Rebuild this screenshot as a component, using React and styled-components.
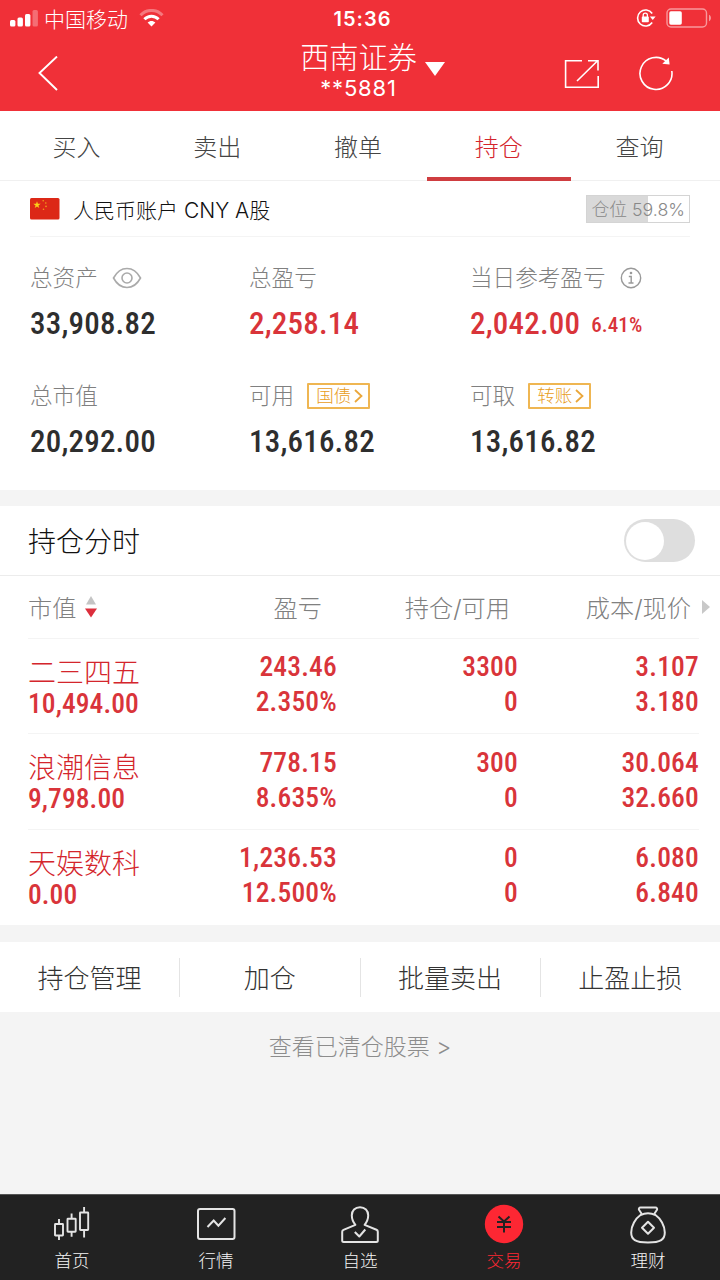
import React from 'react'
import styled, {createGlobalStyle, css} from 'styled-components'

const tabs = ['买入', '卖出', '撤单', '持仓', '查询']

const holdings = [
  {
    name: '二三四五',
    value: '10,494.00',
    profit: '243.46',
    rate: '2.350%',
    amount: '3300',
    usable: '0',
    cost: '3.107',
    price: '3.180'
  },
  {
    name: '浪潮信息',
    value: '9,798.00',
    profit: '778.15',
    rate: '8.635%',
    amount: '300',
    usable: '0',
    cost: '30.064',
    price: '32.660'
  },
  {
    name: '天娱数科',
    value: '0.00',
    profit: '1,236.53',
    rate: '12.500%',
    amount: '0',
    usable: '0',
    cost: '6.080',
    price: '6.840'
  }
]

const actions = ['持仓管理', '加仓', '批量卖出', '止盈止损']

const SignalIcon = () => (
  <svg width="29" height="18" viewBox="0 0 29 18" fill="#fff">
    <rect x="0" y="11" width="5.4" height="6.5" rx="1.5" />
    <rect x="7.5" y="8.5" width="5.4" height="9" rx="1.5" />
    <rect x="15" y="5" width="5.4" height="12.5" rx="1.5" />
    <rect x="22.5" y="1" width="5.4" height="16.5" rx="1.5" opacity="0.3" />
  </svg>
)

const WifiIcon = () => (
  <svg width="25" height="18" viewBox="0 0 25 18" fill="none" stroke="#fff">
    <path d="M1.5 6.2C7.5-.2 17.5-.2 23.5 6.2" strokeWidth="3" opacity="0.35" />
    <path d="M5.4 10.2c4-4.1 10.2-4.1 14.2 0" strokeWidth="3" />
    <path d="M12.5 17.6l-3.9-4c2.2-2.1 5.6-2.1 7.8 0z" fill="#fff" stroke="none" />
  </svg>
)

const LockIcon = () => (
  <svg width="20" height="20" viewBox="0 0 20 20" fill="none" stroke="#fff">
    <path d="M16.2 5.5A8 8 0 1 0 16.2 14.5" strokeWidth="1.6" />
    <path d="M13.8 8.4h5.8L16.8 12z" fill="#fff" stroke="none" />
    <rect x="5.8" y="8.6" width="7" height="5.6" rx="0.8" fill="#fff" stroke="none" />
    <path d="M7.2 9V7.3a2.1 2.1 0 0 1 4.2 0V9" strokeWidth="1.3" />
  </svg>
)

const BatteryIcon = () => (
  <svg width="46" height="20" viewBox="0 0 46 20">
    <rect x="1" y="1" width="39.5" height="18" rx="4" fill="none" stroke="#fff" strokeWidth="1.4" opacity="0.5" />
    <rect x="3.3" y="3.3" width="12.5" height="13.4" rx="1.6" fill="#fff" />
    <path d="M43 6.8c2.6 1 2.6 5.4 0 6.4z" fill="#fff" opacity="0.5" />
  </svg>
)

const BackIcon = () => (
  <svg width="22" height="36" viewBox="0 0 22 36" fill="none" stroke="#fff" strokeWidth="1.9">
    <path d="M20 .5L2.5 17 20 34" />
  </svg>
)

const ShareIcon = () => (
  <svg width="36" height="30" viewBox="0 0 36 30" fill="none" stroke="#fff" strokeWidth="1.6">
    <path d="M18 1.8H1.6v26.4h32.6V17" />
    <path d="M13 22L33.6 1.8M24 1.8h10v9.8" />
  </svg>
)

const RefreshIcon = () => (
  <svg width="36" height="36" viewBox="0 0 36 36" fill="none" stroke="#fff" strokeWidth="1.6">
    <path d="M33.8 15A16 16 0 1 1 28.3 5.2" />
    <path d="M24.3 7.8l6.5-6.2.8 7z" fill="#fff" stroke="none" />
  </svg>
)

const FlagIcon = () => (
  <svg width="30" height="22" viewBox="0 0 30 22">
    <rect width="29.5" height="21.5" rx="1.5" fill="#dc2817" />
    <path
      d="M7 3.2l.9 2.6h2.8L8.4 7.4l.9 2.7L7 8.5l-2.3 1.6.9-2.7-2.3-1.6h2.8z"
      fill="#fbd019"
    />
    <g fill="#f0a01c">
      <circle cx="13.2" cy="2.7" r="0.8" />
      <circle cx="15.8" cy="5" r="0.8" />
      <circle cx="16" cy="8.4" r="0.8" />
      <circle cx="13.5" cy="11.2" r="0.8" />
    </g>
  </svg>
)

const EyeIcon = () => (
  <svg width="30" height="22" viewBox="0 0 30 22" fill="none" stroke="#aaa" strokeWidth="1.6">
    <path d="M1.5 11C5 4.5 9.7 1.5 15 1.5S25 4.5 28.5 11C25 17.5 20.3 20.5 15 20.5S5 17.5 1.5 11z" />
    <circle cx="15" cy="11" r="5" />
  </svg>
)

const InfoIcon = () => (
  <svg width="22" height="22" viewBox="0 0 22 22" fill="none" stroke="#999" strokeWidth="1.4">
    <circle cx="11" cy="11" r="9.7" />
    <path d="M8.8 9.5h2.4v6.3M8.5 16h5" />
    <circle cx="11" cy="6" r="1.3" fill="#999" stroke="none" />
  </svg>
)

const TagArrow = () => (
  <svg width="9" height="14" viewBox="0 0 9 14" fill="none" stroke="#eba73a" strokeWidth="1.8">
    <path d="M1 1l6.5 6L1 13" />
  </svg>
)

const SortIcon = () => (
  <svg width="12" height="22" viewBox="0 0 12 22">
    <path d="M6 0l5 8.5H1z" fill="#c4c4c4" />
    <path d="M0 12.5h12L6 21.5z" fill="#dc2e3c" />
  </svg>
)

const CandleIcon = () => (
  <svg width="38" height="36" viewBox="0 0 38 36" fill="none" stroke="#e4e4e4" strokeWidth="1.9">
    <rect x="2" y="18" width="8" height="11.5" rx="0.5" />
    <rect x="14.5" y="12.8" width="8.2" height="13" rx="0.5" />
    <rect x="27" y="6.5" width="8.2" height="17.5" rx="0.5" />
    <path d="M6 13v5M6 29.5V34M18.6 7.5v5.3M18.6 25.8v5M31.1 1v5.5M31.1 24v7.5" />
  </svg>
)

const ChartIcon = () => (
  <svg width="40" height="36" viewBox="0 0 40 36" fill="none" stroke="#e4e4e4" strokeWidth="2">
    <rect x="2" y="3" width="36.5" height="30" rx="2" />
    <path d="M11.5 21l6.2-6.5 4.7 5.2 7-7.7" />
  </svg>
)

const PersonIcon = () => (
  <svg width="40" height="40" viewBox="0 0 40 40" fill="none" stroke="#e4e4e4" strokeWidth="2" strokeLinejoin="round">
    <path d="M20 3.3c-5 0-8.2 3.4-8.2 8 0 4 1.3 6.8 3.6 9.5L3.5 25.8c-1 .4-1.3 1-1.3 2v8.7c0 1 .5 1.5 1.5 1.5h32.6c1 0 1.5-.5 1.5-1.5v-8.7c0-1-.3-1.6-1.3-2l-11.9-5c2.3-2.7 3.6-5.5 3.6-9.5 0-4.6-3.2-8-8.2-8z" />
    <path d="M14.8 28l4.5 4.5 6-7" />
  </svg>
)

const TradeIcon = () => (
  <svg width="40" height="40" viewBox="0 0 40 40" fill="none" stroke="#222" strokeWidth="2">
    <circle cx="20" cy="20" r="19.2" fill="#fd2733" stroke="none" />
    <path d="M14.5 12.5l5.5 5 5.5-5M13 18h14M13 23h14M20 18v10.5" />
  </svg>
)

const MoneyIcon = () => (
  <svg width="38" height="40" viewBox="0 0 38 40" fill="none" stroke="#e4e4e4" strokeWidth="2" strokeLinejoin="round">
    <path d="M12.8 10L10 5.8c-.5-1.3.2-2.2 1.5-2.2h15c1.3 0 2 .9 1.5 2.2L25.2 10" />
    <path d="M11.5 11c4.5-2 10.5-2 15 0 5 3.5 9.3 10.5 9.3 17.5 0 7-4 10-16.8 10s-16.8-3-16.8-10C2.2 21.5 6.5 14.5 11.5 11z" />
    <path d="M19 17.8l6 6-6 6-6-6z" />
  </svg>
)

const navItems = [
  {label: '首页', Icon: CandleIcon},
  {label: '行情', Icon: ChartIcon},
  {label: '自选', Icon: PersonIcon},
  {label: '交易', Icon: TradeIcon, active: true},
  {label: '理财', Icon: MoneyIcon}
]

const App = () => (
  <>
    <GlobalStyle />
    <Screen>
      <Header>
        <StatusBar>
          <Carrier>
            <SignalIcon />
            <span>中国移动</span>
            <WifiIcon />
          </Carrier>
          <Clock>15:36</Clock>
          <StatusRight>
            <LockIcon />
            <BatteryIcon />
          </StatusRight>
        </StatusBar>
        <TitleBar>
          <BackIcon />
          <Broker>
            <div>
              <BrokerName>西南证券</BrokerName>
              <BrokerAccount>**5881</BrokerAccount>
            </div>
            <Caret />
          </Broker>
          <TitleActions>
            <ShareIcon />
            <RefreshIcon />
          </TitleActions>
        </TitleBar>
      </Header>

      <Tabs>
        {tabs.map(tab => (
          <Tab key={tab} $active={tab === '持仓'}>
            {tab}
          </Tab>
        ))}
      </Tabs>

      <Account>
        <AccountBar>
          <FlagIcon />
          <AccountName>人民币账户 CNY A股</AccountName>
          <Position>仓位 59.8%</Position>
        </AccountBar>
        <Stats>
          <Stat>
            <StatLabel>
              总资产
              <EyeIcon />
            </StatLabel>
            <StatValue>33,908.82</StatValue>
          </Stat>
          <Stat>
            <StatLabel>总盈亏</StatLabel>
            <StatValue $red>2,258.14</StatValue>
          </Stat>
          <Stat>
            <StatLabel>
              当日参考盈亏
              <InfoIcon />
            </StatLabel>
            <StatValue $red>
              2,042.00<Percent>6.41%</Percent>
            </StatValue>
          </Stat>
          <Stat>
            <StatLabel>总市值</StatLabel>
            <StatValue>20,292.00</StatValue>
          </Stat>
          <Stat>
            <StatLabel>
              可用
              <Tag>
                国债
                <TagArrow />
              </Tag>
            </StatLabel>
            <StatValue>13,616.82</StatValue>
          </Stat>
          <Stat>
            <StatLabel>
              可取
              <Tag>
                转账
                <TagArrow />
              </Tag>
            </StatLabel>
            <StatValue>13,616.82</StatValue>
          </Stat>
        </Stats>
      </Account>

      <Holdings>
        <SwitchRow>
          <SwitchTitle>持仓分时</SwitchTitle>
          <Switch />
        </SwitchRow>
        <TableHead>
          <HeadCell>
            市值
            <SortIcon />
          </HeadCell>
          <HeadCell>盈亏</HeadCell>
          <HeadCell>持仓/可用</HeadCell>
          <HeadCell>
            成本/现价
            <MoreArrow />
          </HeadCell>
        </TableHead>
        {holdings.map(item => (
          <HoldingRow key={item.name}>
            <Cell>
              <StockName>{item.name}</StockName>
              <StockValue>{item.value}</StockValue>
            </Cell>
            <Cell>
              <Figure>{item.profit}</Figure>
              <Figure>{item.rate}</Figure>
            </Cell>
            <Cell>
              <Figure>{item.amount}</Figure>
              <Figure>{item.usable}</Figure>
            </Cell>
            <Cell>
              <Figure>{item.cost}</Figure>
              <Figure>{item.price}</Figure>
            </Cell>
          </HoldingRow>
        ))}
      </Holdings>

      <Actions>
        {actions.map(action => (
          <Action key={action}>{action}</Action>
        ))}
      </Actions>
      <ClearedLink>查看已清仓股票 &gt;</ClearedLink>

      <BottomNav>
        {navItems.map(({label, Icon, active}) => (
          <NavItem key={label} $active={active}>
            <NavIcon>
              <Icon />
            </NavIcon>
            {label}
          </NavItem>
        ))}
      </BottomNav>
    </Screen>
  </>
)

export default App

const GlobalStyle = createGlobalStyle`
  * {
    box-sizing: border-box;
  }

  body {
    margin: 0;
  }

  svg {
    display: block;
    flex: none;
  }
`

const numberFont = css`
  font-family: 'Roboto Condensed', Roboto, 'Liberation Sans', sans-serif;
  font-weight: 500;
`

const Screen = styled.div`
  display: flex;
  flex-direction: column;
  width: 720px;
  height: 1280px;
  overflow: hidden;
  background: #f4f4f4;
  color: #333;
  font-family: Inter, 'Noto Sans CJK SC', sans-serif;
  font-weight: 300;
  white-space: nowrap;
`
const Header = styled.header`
  height: 111px;
  flex: none;
  background: #f03038;
  color: #fff;
`
const StatusBar = styled.div`
  display: grid;
  grid-template-columns: 1fr auto 1fr;
  align-items: center;
  height: 36px;
  padding: 0 8px 0 10px;
`
const Carrier = styled.div`
  display: flex;
  align-items: center;
  font-size: 21px;

  span {
    margin: -1px 11px 0 5px;
  }
`
const Clock = styled.div`
  padding: 1px 0 0 3px;
  font-size: 20px;
  font-weight: 600;
  letter-spacing: 1px;
`
const StatusRight = styled.div`
  display: flex;
  justify-content: flex-end;
  align-items: center;
  gap: 10px;
`
const TitleBar = styled.div`
  display: grid;
  grid-template-columns: 1fr auto 1fr;
  align-items: center;
  height: 75px;
  padding: 0 46px 0 37px;
`
const Broker = styled.div`
  display: flex;
  align-items: center;
  padding-left: 34px;
  text-align: center;
`
const BrokerName = styled.div`
  margin-top: -7px;
  font-size: 29.2px;
  line-height: 36px;
`
const BrokerAccount = styled.div`
  font-size: 22px;
  line-height: 24px;
  font-weight: 400;
  letter-spacing: 0.8px;
`
const Caret = styled.div`
  margin: -9px 0 0 8px;
  border: 10px solid transparent;
  border-top: 14px solid #fff;
  border-bottom: 0;
`
const TitleActions = styled.div`
  display: flex;
  justify-content: flex-end;
  align-items: center;
  gap: 38px;
`
const Tabs = styled.nav`
  display: flex;
  height: 70px;
  flex: none;
  padding: 0 10px 0 6px;
  background: #fff;
  border-bottom: 1px solid #f0f0f0;
`
const Tab = styled.div`
  position: relative;
  flex: 1;
  padding-top: 19px;
  font-size: 24px;
  line-height: 36px;
  text-align: center;
  color: ${props => (props.$active ? '#d4252c' : '#444')};

  &::after {
    content: '';
    display: ${props => (props.$active ? 'block' : 'none')};
    position: absolute;
    left: -1px;
    right: -2px;
    bottom: -1px;
    height: 4px;
    background: #cf3d40;
  }
`
const Account = styled.section`
  height: 309px;
  flex: none;
  background: #fff;
`
const AccountBar = styled.div`
  display: flex;
  align-items: center;
  height: 56px;
  margin: 0 30px;
  border-bottom: 1px solid #f4f4f4;
`
const AccountName = styled.div`
  flex: 1;
  margin-left: 13px;
  padding-top: 1px;
  font-size: 21px;
  color: #111;
`
const Position = styled.div`
  height: 28px;
  padding: 1px 4px 0;
  border: 1px solid #d4d4d4;
  background: linear-gradient(to right, #d9d9d9 59.8%, #fff 59.8%);
  color: #888;
  font-size: 17.8px;
  line-height: 26px;
`
const Stats = styled.div`
  display: grid;
  grid-template-columns: 219px 221px 1fr;
  grid-auto-rows: 118px;
  padding: 23px 0 0 30px;
`
const Stat = styled.div`
  display: flex;
  flex-direction: column;
`
const StatLabel = styled.div`
  display: flex;
  align-items: center;
  gap: 14px;
  height: 36px;
  font-size: 22.6px;
  line-height: 36px;
  color: #808080;
`
const StatValue = styled.div`
  ${numberFont}
  margin-top: 8px;
  font-size: 31px;
  line-height: 40px;
  letter-spacing: 0.2px;
  color: ${props => (props.$red ? '#d9343a' : '#2e2e2e')};
`
const Percent = styled.span`
  position: relative;
  top: -2px;
  margin-left: 11px;
  font-size: 21px;
  letter-spacing: 0.1px;
`
const Tag = styled.div`
  display: flex;
  align-items: center;
  gap: 3px;
  height: 26px;
  margin: 0 0 0 -1px;
  padding: 0 5px 0 7px;
  border: 2px solid #efb652;
  border-radius: 1px;
  color: #e89c22;
  font-size: 17.5px;
  line-height: 22px;
`
const Holdings = styled.section`
  height: 419px;
  flex: none;
  margin-top: 16px;
  background: #fff;
`
const SwitchRow = styled.div`
  display: flex;
  align-items: center;
  justify-content: space-between;
  height: 70px;
  padding: 0 25px 0 28px;
  border-bottom: 1px solid #ececec;
`
const SwitchTitle = styled.div`
  padding-top: 3px;
  font-size: 28px;
  line-height: 42px;
  color: #111;
`
const Switch = styled.div`
  width: 71px;
  height: 43px;
  padding: 3px 2px;
  border-radius: 22px;
  background: #dedede;

  &::before {
    content: '';
    display: block;
    width: 38px;
    height: 38px;
    border-radius: 50%;
    background: #fff;
  }
`
const tableColumns = css`
  display: grid;
  grid-template-columns: 158px 151px 181px 181px;
`
const TableHead = styled.div`
  ${tableColumns}
  height: 61.5px;
  margin-left: 28px;
`
const HeadCell = styled.div`
  display: flex;
  align-items: center;
  justify-content: flex-end;
  font-size: 24.2px;
  color: #808080;

  &:first-child {
    justify-content: flex-start;
    gap: 9px;
  }

  &:nth-child(2) {
    padding-right: 15px;
  }

  &:nth-child(3) {
    padding-right: 8px;
  }

  &:last-child {
    margin-right: -11px;
  }
`
const MoreArrow = styled.div`
  margin-left: 11px;
  border: 7px solid transparent;
  border-left: 8px solid #c8c8c8;
  border-right: 0;
`
const HoldingRow = styled.div`
  ${tableColumns}
  height: 95.7px;
  margin: 0 21px 0 28px;
  border-top: 1px solid #f4f4f4;
  color: #d9343a;
`
const Cell = styled.div`
  padding-top: 10.5px;
  text-align: right;

  &:first-child {
    padding-top: 18px;
    text-align: left;
  }
`
const StockName = styled.div`
  font-size: 28px;
  line-height: 32px;
  color: #d4252c;
`
const StockValue = styled.div`
  ${numberFont}
  font-size: 27.5px;
  line-height: 30px;
  letter-spacing: 0.1px;
`
const Figure = styled.div`
  ${numberFont}
  font-size: 27.5px;
  line-height: 35px;
  letter-spacing: 0.2px;
`
const Actions = styled.div`
  display: flex;
  align-items: center;
  height: 70px;
  flex: none;
  margin-top: 17px;
  background: #fff;
`
const Action = styled.div`
  flex: 1;
  height: 39px;
  font-size: 26px;
  line-height: 42px;
  text-align: center;
  color: #333;

  & + & {
    border-left: 1px solid #e4e4e4;
  }
`
const ClearedLink = styled.div`
  padding-top: 18px;
  font-size: 23px;
  line-height: 34px;
  text-align: center;
  color: #8c8c8c;
`
const BottomNav = styled.nav`
  display: flex;
  height: 86px;
  flex: none;
  margin-top: auto;
  background: #222;
  border-top: 1px solid #555;
`
const NavItem = styled.div`
  display: flex;
  flex: 1;
  flex-direction: column;
  align-items: center;
  padding-top: 9px;
  font-size: 17.5px;
  line-height: 26px;
  color: ${props => (props.$active ? '#fd2733' : '#f4f4f4')};
`
const NavIcon = styled.div`
  display: flex;
  align-items: center;
  height: 40px;
  margin-bottom: 4px;
`
